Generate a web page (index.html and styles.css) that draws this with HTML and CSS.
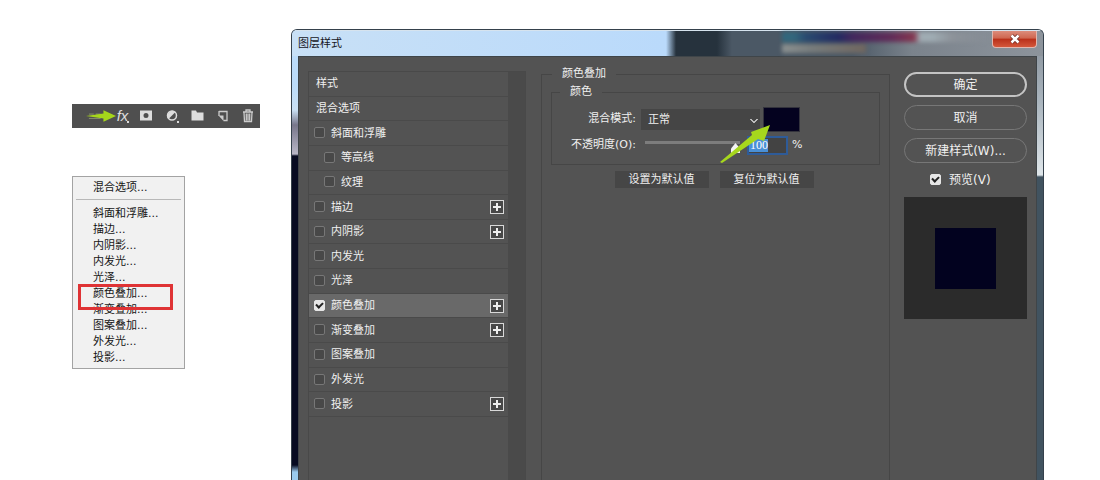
FILE: index.html
```
<!DOCTYPE html>
<html lang="zh-CN">
<head>
<meta charset="utf-8">
<title>图层样式</title>
<link rel="stylesheet" href="styles.css">
</head>
<body>
<main class="page">
  <aside class="side">
    <div class="toolbar">
      <svg class="toolbar-arrow" viewBox="0 0 32 12" aria-hidden="true">
        <path d="M3 4h5M10 4h5M3 8.500h12" stroke="#87906f" fill="none"/>
        <path d="M0 6L18 3.500V0l13 6-13 6V8.500z" fill="#a5d61b"/>
      </svg>
      <button class="tool tool-fx" type="button">fx<span class="tool-dot"></span></button>
      <button class="tool" type="button" aria-label="蒙版"><svg viewBox="0 0 16 16"><path fill="#ddd" fill-rule="evenodd" d="M0 2.500h12v10H0zM6 5a2.500 2.500 0 1 0 0 5a2.500 2.500 0 1 0 0-5z"/></svg></button>
      <button class="tool" type="button" aria-label="调整"><svg viewBox="0 0 16 16"><circle cx="7" cy="7.500" r="4.500" fill="none" stroke="#ddd" stroke-width="1.500"/><path d="M3.500 11A5 5 0 0 1 10.500 4z" fill="#ddd"/></svg><span class="tool-dot"></span></button>
      <button class="tool" type="button" aria-label="组"><svg viewBox="0 0 16 16"><path fill="#ddd" d="M1.500 2.500H6l1 2h6.500v8h-12z"/></svg></button>
      <button class="tool" type="button" aria-label="新建"><svg viewBox="0 0 16 16"><path fill="none" stroke="#ccc" stroke-width="1.300" d="M4 3.500h8v9H8.500M4 3v5"/><path fill="#ccc" d="M3.500 7.500h5V13z"/></svg></button>
      <button class="tool" type="button" aria-label="删除"><svg viewBox="0 0 16 16"><path fill="none" stroke="#ccc" stroke-width="1.300" d="M3 4h10M6 3.500V2h4v1.500M4 4.500l.5 9h7l.5-9M6.300 5.500v7M8 5.500v7M9.700 5.500v7"/></svg></button>
    </div>
    <ul class="menu">
      <li>混合选项...</li>
      <li class="menu-line"></li>
      <li>斜面和浮雕...</li>
      <li>描边...</li>
      <li>内阴影...</li>
      <li>内发光...</li>
      <li>光泽...</li>
      <li class="menu-marked">颜色叠加...</li>
      <li>渐变叠加...</li>
      <li>图案叠加...</li>
      <li>外发光...</li>
      <li>投影...</li>
    </ul>
  </aside>

  <section class="dialog">
    <header class="titlebar">
      <h1>图层样式</h1>
      <div class="glass"><span class="glass-top"></span><span class="glass-low"></span></div>
      <button class="close" type="button" aria-label="关闭"><svg viewBox="0 0 12 10"><path d="M2.500 1.500l7 7M9.500 1.500l-7 7" stroke="#6d2d26" stroke-width="4"/><path d="M2.500 1.500l7 7M9.500 1.500l-7 7" stroke="#fff" stroke-width="2.500"/></svg></button>
    </header>
    <div class="content">
      <div class="list">
        <ul class="styles">
          <li>样式</li>
          <li>混合选项</li>
          <li><label><input type="checkbox">斜面和浮雕</label></li>
          <li class="sub"><label><input type="checkbox">等高线</label></li>
          <li class="sub"><label><input type="checkbox">纹理</label></li>
          <li><label><input type="checkbox">描边</label><button class="plus" type="button" aria-label="添加描边"></button></li>
          <li><label><input type="checkbox">内阴影</label><button class="plus" type="button" aria-label="添加内阴影"></button></li>
          <li><label><input type="checkbox">内发光</label></li>
          <li><label><input type="checkbox">光泽</label></li>
          <li class="selected"><label><input type="checkbox" checked>颜色叠加</label><button class="plus" type="button" aria-label="添加颜色叠加"></button></li>
          <li><label><input type="checkbox">渐变叠加</label><button class="plus" type="button" aria-label="添加渐变叠加"></button></li>
          <li><label><input type="checkbox">图案叠加</label></li>
          <li><label><input type="checkbox">外发光</label></li>
          <li><label><input type="checkbox">投影</label><button class="plus" type="button" aria-label="添加投影"></button></li>
        </ul>
      </div>

      <fieldset class="panel">
        <legend>颜色叠加</legend>
        <fieldset class="group">
          <legend>颜色</legend>
          <div class="field">
            <label class="name" for="mode">混合模式:</label>
            <select id="mode"><option>正常</option></select>
            <button class="swatch" type="button" aria-label="颜色"></button>
          </div>
          <div class="field">
            <label class="name" for="opacity">不透明度(O):</label>
            <input class="slider" type="range" min="0" max="100" value="100" aria-label="不透明度">
            <input class="amount" id="opacity" type="text" value="100">
            <span>%</span>
          </div>
          <svg class="pointer" viewBox="0 0 52 40" aria-hidden="true"><path d="M0 38L32 11L31 8L50 1L44 17L38 15L2 39z" fill="#a6d71d"/></svg>
        </fieldset>
        <div class="defaults">
          <button type="button">设置为默认值</button>
          <button type="button">复位为默认值</button>
        </div>
      </fieldset>

      <div class="actions">
        <button class="pill pill-main" type="button">确定</button>
        <button class="pill" type="button">取消</button>
        <button class="pill" type="button">新建样式(W)...</button>
        <label class="preview-label"><input type="checkbox" checked>预览(V)</label>
        <div class="preview"><div class="preview-color"></div></div>
      </div>
    </div>
  </section>
</main>
</body>
</html>
```
FILE: styles.css
```
*, *::before, *::after { box-sizing: border-box; }
body {
  margin: 0;
  background: #fff;
  font: 11px/16px "DejaVu Sans", "Noto Sans CJK SC", sans-serif;
}
button, input, select { font: inherit; color: inherit; margin: 0; }
ul { list-style: none; margin: 0; padding: 0; }
svg { display: block; }

.page {
  display: flex;
  gap: 31px;
  height: 100vh;
  padding: 29px 56px 0 72px;
  overflow: hidden;
}
.side { flex: 0 0 188px; padding-top: 75px; }

.toolbar {
  position: relative;
  display: flex;
  justify-content: flex-end;
  height: 24px;
  background: #4f4f4f;
}
.toolbar-arrow { position: absolute; left: 14px; top: 6px; width: 31px; height: 12px; }
.tool {
  position: relative;
  display: flex;
  align-items: center;
  justify-content: center;
  width: 25px;
  padding: 0;
  border: 0;
  background: none;
  color: #ddd;
}
.tool svg { width: 16px; height: 16px; }
.tool-fx { font: italic 15px/20px "Liberation Sans", sans-serif; }
.tool-dot { position: absolute; right: 6px; bottom: 5px; width: 2px; height: 2px; background: #ddd; }

.menu {
  width: 113px;
  margin-top: 48px;
  padding: 3px 3px 2px;
  border: 1px solid #a3a3a3;
  background: #f1f1f1;
  color: #161616;
}
.menu li { position: relative; height: 16px; padding-left: 17px; }
.menu .menu-line { height: 1px; margin: 3px 0 6px; padding: 0; background: #b8b8b8; }
.menu-marked::after {
  content: "";
  position: absolute;
  left: 2px;
  top: -2px;
  z-index: 1;
  width: 95px;
  height: 26px;
  border: 3px solid #df3335;
}

.dialog {
  flex: 1;
  display: flex;
  flex-direction: column;
  border: 1px solid #35414c;
  border-bottom: 0;
  border-radius: 6px 6px 0 0;
  padding: 0 6px;
  overflow: hidden;
  background:
    linear-gradient(#bcdcfa 0 55px, #c9e0f4 80px, #77768a 95px, #b9b7c8 124px, #070b22 126px 435px, #9bcbee 442px) left / 6px 100% no-repeat,
    linear-gradient(#858d97, #a9b4bd 70px, #dfe6ea 145px, #415360 147px) right / 6px 100% no-repeat,
    #bcdcfa;
}
.titlebar {
  display: flex;
  align-items: flex-start;
  flex: 0 0 26px;
  margin: 0 -6px;
  padding-left: 6px;
  background: linear-gradient(90deg, #c8e0f6, #badafb 370px 374px, #26323d 384px 425px, #4b5865 440px 560px, #7b838c 620px, #8d949c);
  border-top: 1px solid #d6e3ee;
  color: #15151c;
}
.titlebar h1 { flex: 1; margin: 0; padding-top: 5px; font: inherit; }
.glass { display: grid; gap: 2px; width: 210px; padding-top: 1px; filter: blur(2px); }
.glass-top { height: 10px; background: linear-gradient(90deg, #32677d 0 12px, #294b70 24px, #232b62 56px, #42285e 70px, #622d58 110px, #853750 132px, #a0acb3 138px 150px, #8d939a 170px, transparent); }
.glass-low { height: 9px; width: 84px; background: linear-gradient(90deg, #8b9191, #777c7c 30px, #70665f); }
.close {
  display: flex;
  align-items: center;
  justify-content: center;
  width: 45px;
  height: 17px;
  margin-right: 6px;
  border: 1px solid #e2b7ae;
  border-top: 0;
  border-radius: 0 0 4px 4px;
  padding: 0;
  background: linear-gradient(#dc8d7c, #cf6650 45%, #b9301a 50%, #d4573a);
}
.close svg { width: 12px; height: 10px; }

.content {
  flex: 1;
  display: flex;
  min-height: 0;
  padding: 9px 9px 0;
  border: 1px solid #3f4549;
  border-bottom: 0;
  background: #535353;
  color: #f0f0f0;
}
.list {
  flex: 0 0 218px;
  margin-top: 5px;
  padding-right: 17px;
  border: 1px solid #494949;
  border-bottom: 0;
  background: linear-gradient(#4a4a4a, #4a4a4a) right / 17px 100% no-repeat, #535353;
}
.styles { display: grid; grid-template-rows: repeat(14, 1fr); height: 345px; }
.styles li {
  display: flex;
  align-items: center;
  justify-content: space-between;
  padding: 1px 4px 0 7px;
  border-bottom: 1px solid #4a4a4a;
}
.styles label { display: flex; align-items: center; gap: 6px; margin-left: -2px; }
.styles .sub { padding-left: 17px; }
.styles .selected { background: #696969; }

input[type="checkbox"] {
  appearance: none;
  flex: none;
  width: 11px;
  height: 11px;
  border: 1px solid #777;
  border-radius: 2px;
  background: #484848;
}
.styles input[type="checkbox"] { margin-bottom: 2px; }
input[type="checkbox"]:checked { position: relative; border-color: #e6e6e6; background: #e6e6e6; }
input[type="checkbox"]:checked::after {
  content: "";
  position: absolute;
  left: 2px;
  top: 0;
  width: 5px;
  height: 7px;
  border: solid #222;
  border-width: 0 2px 2px 0;
  transform: rotate(45deg);
}
.plus {
  width: 14px;
  height: 14px;
  margin-bottom: 1px;
  padding: 0;
  border: 1px solid #d8d8d8;
  background:
    linear-gradient(#eee, #eee) center / 8px 2px no-repeat,
    linear-gradient(#eee, #eee) center / 2px 8px no-repeat,
    #484848;
}

fieldset { min-width: 0; margin: 0; padding: 0; border: 1px solid #464646; }
legend { height: 16px; padding: 0 10px; }
.panel { flex: 1; margin: 0 14px 0 15px; padding: 0 9px; border-bottom: 0; }
.panel > legend { margin-left: 1px; }
.group { position: relative; margin-top: 2px; padding-bottom: 6px; white-space: nowrap; }
.group > legend { margin-left: 8px; }
.field { display: flex; align-items: center; height: 26px; }
.field:first-of-type { margin-top: 6px; }
.name { flex: 0 0 84px; margin-right: 5px; text-align: right; }
select {
  appearance: none;
  width: 119px;
  height: 21px;
  padding: 2px 7px 0;
  border: 0;
  background:
    linear-gradient(45deg, transparent 50%, #bbb 50% 66%, transparent 66%) 109px 10px / 4px 4px no-repeat,
    linear-gradient(-45deg, transparent 50%, #bbb 50% 66%, transparent 66%) 113px 10px / 4px 4px no-repeat,
    #454545;
}
.swatch { width: 37px; height: 25px; margin-left: 3px; border: 1px solid #33333c; background: #04021f; }
.slider {
  appearance: none;
  width: 95px;
  height: 16px;
  margin: 0 7px 0 4px;
  background: linear-gradient(#7d7d7d, #7d7d7d) 0 4px / 100% 3px no-repeat;
}
.slider::-webkit-slider-thumb {
  appearance: none;
  width: 9px;
  height: 10px;
  margin-top: 6px;
  background: #f4f4f4;
  clip-path: polygon(50% 0, 100% 55%, 100% 100%, 0 100%, 0 55%);
}
.field .amount {
  width: 41px;
  height: 19px;
  margin-right: 4px;
  padding: 0 1px;
  border: 2px solid #2e5b98;
  background: linear-gradient(#4a90d6, #4a90d6) 0 1px / 19px 13px no-repeat, #434343;
  color: #fff;
  font: 12px/14px "Liberation Serif", serif;
}
.pointer { position: absolute; left: 168px; top: 24px; width: 52px; height: 40px; pointer-events: none; }

.defaults { display: flex; justify-content: center; gap: 11px; margin: 6px 3px 0 0; }
.defaults button { width: 94px; height: 17px; padding: 0; border: 0; background: #464646; line-height: 16px; }

.actions {
  flex: 0 0 123px;
  display: flex;
  flex-direction: column;
  gap: 8px;
  padding-top: 6px;
  font-size: 12px;
}
.pill { flex: none; height: 25px; padding: 0; border: 1px solid #777; border-radius: 13px; background: none; }
.pill-main { border: 2px solid #c4c4c4; }
.preview-label { display: flex; align-items: center; gap: 8px; margin-left: 26px; height: 18px; }
.preview-label input { margin-bottom: 2px; }
.preview { display: grid; place-items: center; height: 122px; background: #2b2b2b; }
.preview-color { width: 61px; height: 61px; background: #02021f; }
```
